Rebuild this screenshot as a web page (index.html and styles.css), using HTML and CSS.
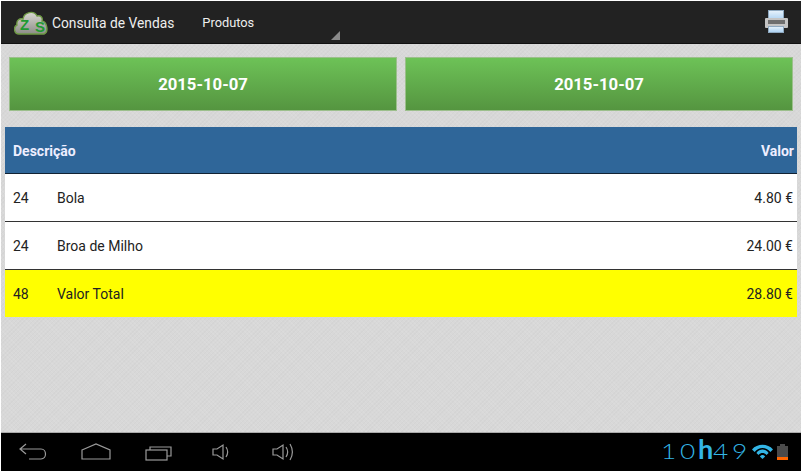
FILE: index.html
```html
<!DOCTYPE html>
<html>
<head>
    <title>Consulta de Vendas</title>
    <link rel="stylesheet" href="styles.css">
</head>
<body>
    <div id="container">
        <div class="action-bar">
            <svg class="logo" width="34" height="26" viewBox="0 0 34 26">
                <defs>
                    <linearGradient id="cloud" x1="0" y1="0" x2="0" y2="1">
                        <stop offset="0" stop-color="#d8d8d0"/>
                        <stop offset="1" stop-color="#8c8c88"/>
                    </linearGradient>
                </defs>
                <path d="M5 24 C0 24 -1 17 3 15 C2 10 6 8 9 9 C10 2 20 0 23 6 C27 5 29 8 28 11 C33 12 35 22 30 24 Z" fill="url(#cloud)" stroke="#6f9a45" stroke-width="1.4"/>
                <text class="logo-letter" x="6" y="20">Z</text>
                <text class="logo-letter" x="21" y="22">S</text>
            </svg>
            <span class="app-title">Consulta de Vendas</span>
            <div class="spinner">
                <span>Produtos</span>
                <div class="spinner-arrow"></div>
            </div>
            <svg class="print-icon" width="23" height="23" viewBox="0 0 23 23">
                <defs>
                    <linearGradient id="paper" x1="0" y1="0" x2="0" y2="1">
                        <stop offset="0" stop-color="#e8f3fc"/>
                        <stop offset="1" stop-color="#a9d0f2"/>
                    </linearGradient>
                </defs>
                <rect x="3.500" y="0.500" width="15" height="10" fill="url(#paper)" stroke="#8fa9c0"/>
                <rect x="0" y="8" width="23" height="10" rx="1" fill="#c4c4c4"/>
                <rect x="3" y="10" width="17" height="4" fill="#6e6e6e"/>
                <rect x="3.500" y="16.500" width="15" height="6" fill="url(#paper)" stroke="#8fa9c0"/>
            </svg>
        </div>

        <div class="content">
            <div class="date-row">
                <div class="date-button">2015-10-07</div>
                <div class="date-button">2015-10-07</div>
            </div>

            <div class="sales-table">
                <div class="table-head">
                    <span>Descrição</span>
                    <span>Valor</span>
                </div>
                <div class="table-row">
                    <span class="qty">24</span>
                    <span class="name">Bola</span>
                    <span class="price">4.80 €</span>
                </div>
                <div class="table-row">
                    <span class="qty">24</span>
                    <span class="name">Broa de Milho</span>
                    <span class="price">24.00 €</span>
                </div>
                <div class="table-row total">
                    <span class="qty">48</span>
                    <span class="name">Valor Total</span>
                    <span class="price">28.80 €</span>
                </div>
            </div>
        </div>

        <div class="nav-bar">
            <div class="nav-icons">
                <svg width="28" height="18" viewBox="0 0 28 18" fill="none" stroke="#9a9a9a" stroke-width="1.2">
                    <path d="M7 1 L1 6 L7 11 M1 6 H22 C28 6 28 16 22 16 H10"/>
                </svg>
                <svg width="30" height="18" viewBox="0 0 30 18" fill="none" stroke="#9a9a9a" stroke-width="1.2">
                    <path d="M1 7 L15 1 L29 7 V16 H1 Z"/>
                </svg>
                <svg width="28" height="18" viewBox="0 0 28 18" fill="none" stroke="#9a9a9a" stroke-width="1.2">
                    <rect x="1" y="7" width="21" height="10"/>
                    <path d="M5 7 V4 H26 V13 H22"/>
                </svg>
                <svg class="vol-down" width="18" height="18" viewBox="0 0 18 18" fill="none" stroke="#9a9a9a" stroke-width="1.2">
                    <path d="M1 6 H5 L11 2 V16 L5 12 H1 Z M14 4 C16 7 16 11 14 14"/>
                </svg>
                <svg class="vol-up" width="22" height="18" viewBox="0 0 22 18" fill="none" stroke="#9a9a9a" stroke-width="1.2">
                    <path d="M1 6 H5 L11 2 V16 L5 12 H1 Z M14 4 C16 7 16 11 14 14 M18 1 C21 6 21 12 18 17"/>
                </svg>
            </div>
            <div class="status">
                <span class="clock">10<b>h</b>49</span>
                <svg class="wifi" width="21" height="16" viewBox="0 0 24 18">
                    <path d="M0 6 C6 -1 18 -1 24 6 L21 9 C16 3 8 3 3 9 Z" fill="#33b5e5"/>
                    <path d="M5 10 C9 5 15 5 19 10 L16.500 12.500 C14 9.500 10 9.500 7.500 12.500 Z" fill="#33b5e5"/>
                    <path d="M9 14 C11 12 13 12 15 14 L12 17 Z" fill="#33b5e5"/>
                </svg>
                <div class="battery"></div>
            </div>
        </div>
    </div>
</body>
</html>
```

FILE: styles.css
```css
body {
    margin: 0;
    background-color: #fff;
    font-family: Roboto, 'Liberation Sans', sans-serif;
}

#container {
    width: 800px;
    height: 470px;
    margin: 1px 0 0 1px;
    display: flex;
    flex-direction: column;
    overflow: hidden;
}

.action-bar {
    height: 41px;
    padding-top: 1px;
    background-color: #222;
    border-bottom: 1px solid #111;
    display: flex;
    align-items: center;
    color: #eee;
    flex-shrink: 0;
}

.logo {
    margin-left: 13px;
}

.logo-letter {
    font-family: 'Liberation Sans', sans-serif;
    font-size: 15px;
    font-weight: bold;
    fill: #1f9a32;
}

.app-title {
    margin-left: 4px;
    font-size: 13.8px;
}

.spinner {
    margin-left: 28px;
    width: 138px;
    height: 41px;
    display: flex;
    align-items: center;
    position: relative;
    font-size: 12.8px;
}

.spinner-arrow {
    position: absolute;
    right: 0;
    bottom: 3px;
    width: 0;
    height: 0;
    border-left: 9px solid transparent;
    border-bottom: 9px solid #8a8a8a;
}

.print-icon {
    margin: 0 13px 3px auto;
}

.content {
    flex: 1;
    background-color: #d8d8d8;
    background-image:
        repeating-linear-gradient(45deg, rgba(255,255,255,0.07) 0 1px, transparent 1px 3px),
        repeating-linear-gradient(-45deg, rgba(0,0,0,0.02) 0 1px, transparent 1px 3px);
    padding: 13px 4px 0 4px;
}

.date-row {
    display: flex;
    gap: 8px;
    padding: 0 4px;
    margin-bottom: 16px;
}

.date-button {
    flex: 1;
    height: 54px;
    padding-top: 1px;
    box-sizing: border-box;
    border: 1px solid #9cbf8c;
    background: linear-gradient(#6dc257, #559540);
    color: #fff;
    font-size: 16.7px;
    font-weight: bold;
    display: flex;
    align-items: center;
    justify-content: center;
}

.table-head {
    height: 45px;
    padding: 1px 3px 0 8px;
    background-color: #2f6699;
    border-bottom: 1px solid #123;
    color: #eef;
    font-size: 14px;
    font-weight: bold;
    display: flex;
    align-items: center;
    justify-content: space-between;
}

.table-row {
    height: 47px;
    background-color: #fff;
    border-bottom: 1px solid #333;
    color: #222;
    font-size: 14px;
    display: flex;
    align-items: center;
    padding: 0 4px 0 8px;
}

.table-row.total {
    background-color: #ff0;
    border-bottom: none;
}

.qty {
    width: 44px;
}

.price {
    margin-left: auto;
}

.nav-bar {
    height: 38px;
    background-color: #000;
    border-top: 1px solid #aaa;
    display: flex;
    align-items: center;
    justify-content: space-between;
    flex-shrink: 0;
}

.nav-icons {
    display: flex;
    align-items: center;
    gap: 34px;
    margin-left: 18px;
}

.nav-icons .vol-down {
    margin-left: 5px;
}

.nav-icons .vol-up {
    margin-left: 8px;
}

.status {
    display: flex;
    align-items: center;
    margin-right: 13px;
}

.clock {
    display: inline-block;
    margin-bottom: 8px;
    font-family: Lato, sans-serif;
    font-weight: 300;
    font-size: 21px;
    letter-spacing: 3px;
    color: #33b5e5;
    line-height: 1;
    transform: scaleX(1.25);
    transform-origin: right center;
}

.clock b {
    display: inline-block;
    font-weight: bold;
    font-size: 27px;
    letter-spacing: 0;
    margin: 0 -2px;
    transform: scaleX(0.8);
}

.wifi {
    margin-left: 1px;
}

.battery {
    width: 11px;
    height: 14px;
    margin: 2px 0 0 4px;
    position: relative;
    background: linear-gradient(#4a4a4a 78%, #f60 78%);
}

.battery::before {
    content: "";
    position: absolute;
    top: -2px;
    left: 3px;
    width: 5px;
    height: 2px;
    background-color: #4a4a4a;
}
```
